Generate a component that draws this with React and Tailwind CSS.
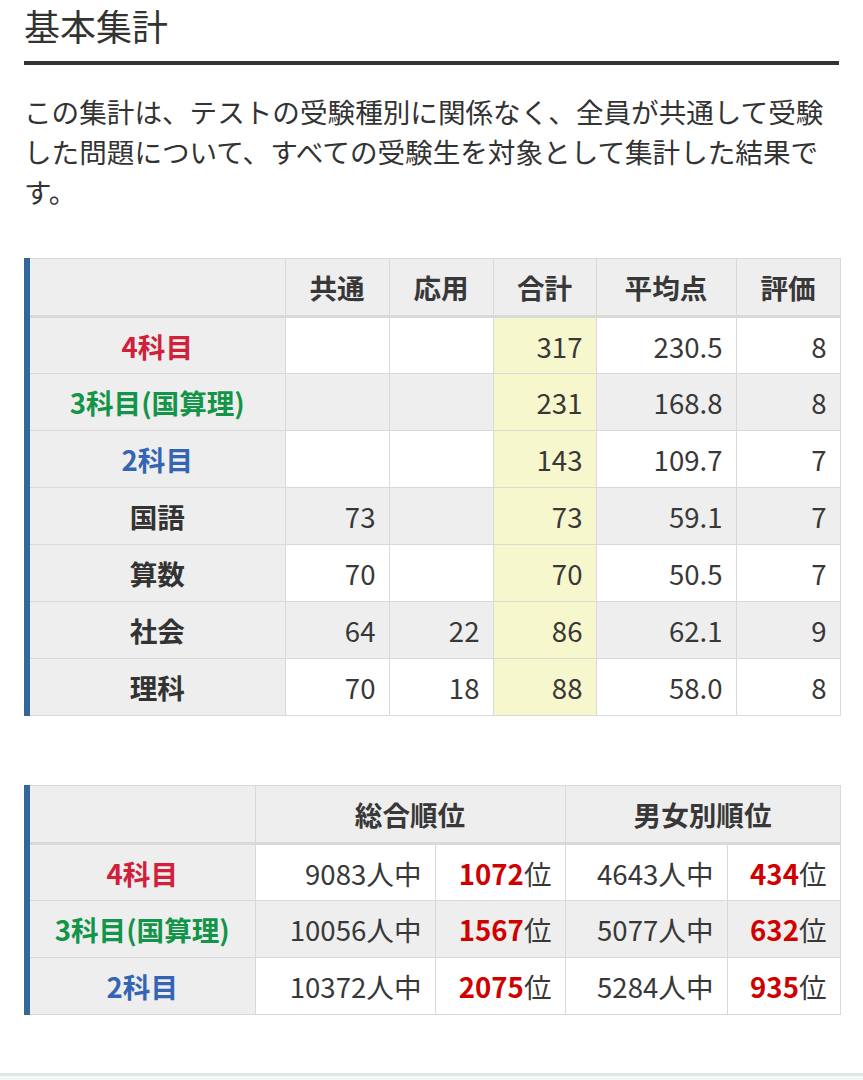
import React from 'react';

const font = { fontFamily: '"Noto Sans CJK JP", "Noto Sans", sans-serif' };

const scoreRows = [
  { label: '4科目', color: 'text-[#d0203a]', common: '', applied: '', total: '317', avg: '230.5', grade: '8' },
  { label: '3科目(国算理)', color: 'text-[#129548]', common: '', applied: '', total: '231', avg: '168.8', grade: '8' },
  { label: '2科目', color: 'text-[#3465b4]', common: '', applied: '', total: '143', avg: '109.7', grade: '7' },
  { label: '国語', color: 'text-[#333]', common: '73', applied: '', total: '73', avg: '59.1', grade: '7' },
  { label: '算数', color: 'text-[#333]', common: '70', applied: '', total: '70', avg: '50.5', grade: '7' },
  { label: '社会', color: 'text-[#333]', common: '64', applied: '22', total: '86', avg: '62.1', grade: '9' },
  { label: '理科', color: 'text-[#333]', common: '70', applied: '18', total: '88', avg: '58.0', grade: '8' },
];

const rankRows = [
  { label: '4科目', color: 'text-[#d0203a]', all: '9083', allRank: '1072', sex: '4643', sexRank: '434' },
  { label: '3科目(国算理)', color: 'text-[#129548]', all: '10056', allRank: '1567', sex: '5077', sexRank: '632' },
  { label: '2科目', color: 'text-[#3465b4]', all: '10372', allRank: '2075', sex: '5284', sexRank: '935' },
];

const cell = 'border border-[#d9d9d9] h-[57px] px-[13px] text-right leading-[40px]';
const head = 'border border-[#d9d9d9] border-b-[3px] h-[58px] bg-[#eeeeee] font-bold text-center leading-[40px]';
const label = 'border border-l-0 border-[#d9d9d9] h-[57px] bg-[#eeeeee] text-center font-bold leading-[40px]';

const ScoreTable = () => (
  <div className="border-l-[6px] border-[#336699]">
    <table className="w-full table-fixed border-collapse text-[27.6px] text-[#383838]">
      <colgroup>
        <col className="w-[255px]" />
        <col className="w-[104px]" />
        <col className="w-[104px]" />
        <col className="w-[103px]" />
        <col className="w-[140px]" />
        <col className="w-[104px]" />
      </colgroup>
      <thead>
        <tr>
          <th className={`${head} border-l-0`}></th>
          <th className={head}>共通</th>
          <th className={head}>応用</th>
          <th className={head}>合計</th>
          <th className={head}>平均点</th>
          <th className={head}>評価</th>
        </tr>
      </thead>
      <tbody>
        {scoreRows.map((r, i) => {
          const bg = i % 2 === 1 ? 'bg-[#eeeeee]' : 'bg-white';
          return (
            <tr key={r.label}>
              <td className={`${label} ${r.color}`}>{r.label}</td>
              <td className={`${cell} ${bg}`}>{r.common}</td>
              <td className={`${cell} ${bg}`}>{r.applied}</td>
              <td className={`${cell} bg-[#f7f7cd]`}>{r.total}</td>
              <td className={`${cell} ${bg}`}>{r.avg}</td>
              <td className={`${cell} ${bg}`}>{r.grade}</td>
            </tr>
          );
        })}
      </tbody>
    </table>
  </div>
);

const RankTable = () => (
  <div className="border-l-[6px] border-[#336699]">
    <table className="w-full table-fixed border-collapse text-[27.6px] text-[#383838]">
      <colgroup>
        <col className="w-[225px]" />
        <col className="w-[180px]" />
        <col className="w-[130px]" />
        <col className="w-[162px]" />
        <col className="w-[113px]" />
      </colgroup>
      <thead>
        <tr>
          <th className={`${head} border-l-0`}></th>
          <th colSpan={2} className={head}>総合順位</th>
          <th colSpan={2} className={head}>男女別順位</th>
        </tr>
      </thead>
      <tbody>
        {rankRows.map((r, i) => {
          const bg = i % 2 === 1 ? 'bg-[#eeeeee]' : 'bg-white';
          return (
            <tr key={r.label}>
              <td className={`${label} ${r.color}`}>{r.label}</td>
              <td className={`${cell} ${bg}`}>{r.all}人中</td>
              <td className={`${cell} ${bg}`}>
                <span className="font-bold text-[#d00000]">{r.allRank}</span>位
              </td>
              <td className={`${cell} ${bg}`}>{r.sex}人中</td>
              <td className={`${cell} ${bg}`}>
                <span className="font-bold text-[#d00000]">{r.sexRank}</span>位
              </td>
            </tr>
          );
        })}
      </tbody>
    </table>
  </div>
);

export default function App() {
  return (
    <div className="min-h-screen bg-white" style={font}>
      <div className="px-6 pb-[58px]">
        <h2 className="border-b-4 border-[#333] pt-[2px] pb-[13px] text-[36px] leading-[46px] font-normal text-[#333]">
          基本集計
        </h2>
        <p className="mt-[26px] text-[27.6px] leading-[40px] text-[#333]">
          この集計は、テストの受験種別に関係なく、全員が共通して受験した問題について、すべての受験生を対象として集計した結果です。
        </p>

        <div className="mt-[47px] mr-[-1px]">
          <ScoreTable />
        </div>

        <div className="mt-[69px] mr-[-1px]">
          <RankTable />
        </div>
      </div>
      <div className="h-[40px] border-t-[3px] border-[#dde9e5] bg-[#f3f7f6]"></div>
    </div>
  );
}
